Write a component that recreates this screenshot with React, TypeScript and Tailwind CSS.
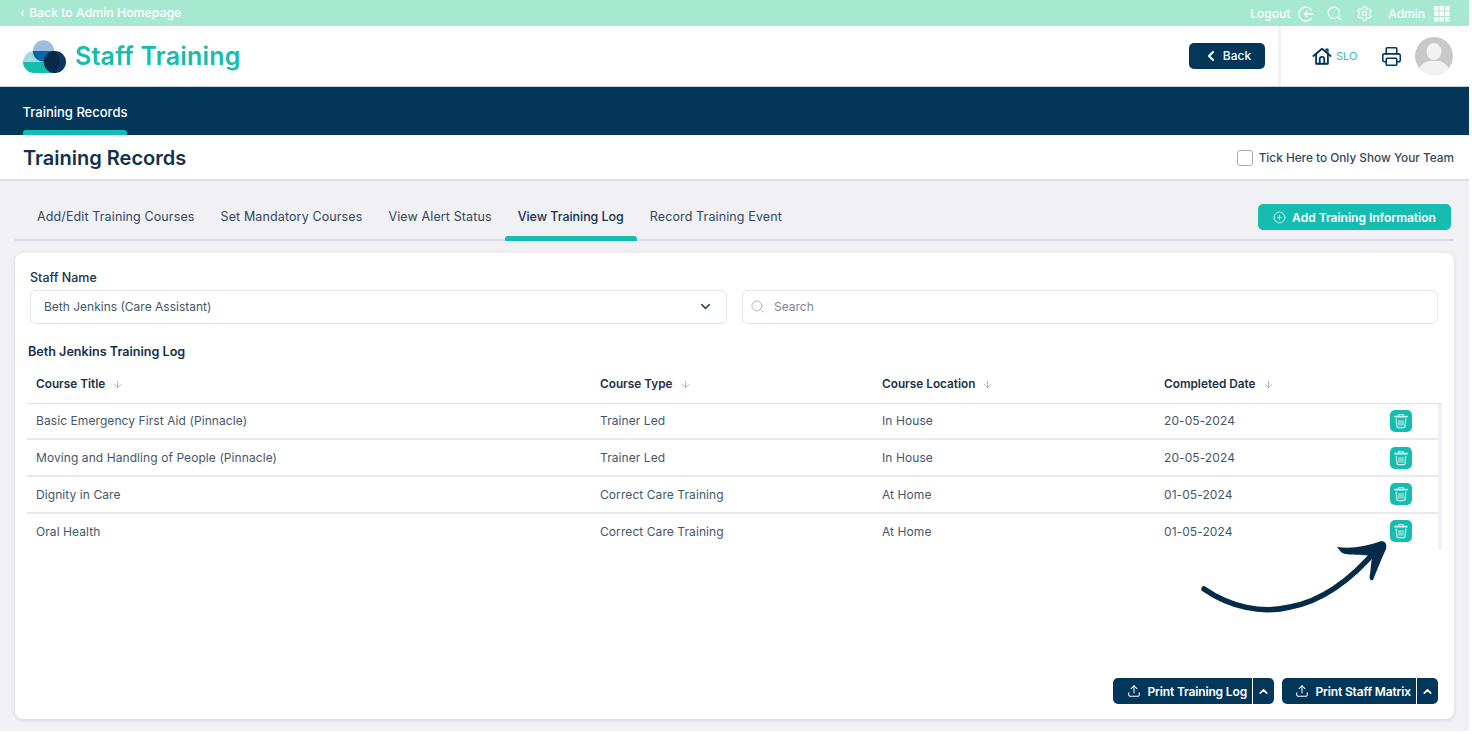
import { ArrowDown, ChevronDown, ChevronLeft, ChevronUp, CirclePlus, Printer, Search, Settings, Upload } from 'lucide-react'

const ROWS = [
  { title: 'Basic Emergency First Aid (Pinnacle)', type: 'Trainer Led', location: 'In House', date: '20-05-2024' },
  { title: 'Moving and Handling of People (Pinnacle)', type: 'Trainer Led', location: 'In House', date: '20-05-2024' },
  { title: 'Dignity in Care', type: 'Correct Care Training', location: 'At Home', date: '01-05-2024' },
  { title: 'Oral Health', type: 'Correct Care Training', location: 'At Home', date: '01-05-2024' },
]

const TABS = ['Add/Edit Training Courses', 'Set Mandatory Courses', 'View Alert Status', 'View Training Log', 'Record Training Event']

function Logo() {
  return (
    <svg className="mt-[1px]" width={44} height={34} viewBox="0 0 44 34" aria-hidden="true">
      <path d="M0 22 A11 11 0 0 1 11 11 H32 V22Z" fill="#a3dcd8" />
      <path d="M9.800 11 A10.700 10.700 0 0 1 31.200 11Z" fill="#9dbfdd" />
      <path d="M9.800 11 A10.700 10.700 0 0 0 31.200 11Z" fill="#0a66a8" />
      <path d="M0 22 H32 V33 H11 A11 11 0 0 1 0 22Z" fill="#17bcb0" />
      <circle cx="32" cy="22" r="11" fill="#0f3560" />
      <path d="M32 11 A11 11 0 0 0 32 33 A16 16 0 0 0 32 11Z" fill="#07294a" />
    </svg>
  )
}

function Avatar() {
  return (
    <svg width={38} height={38} viewBox="0 0 38 38" aria-hidden="true">
      <clipPath id="avatar-clip">
        <circle cx="19" cy="19" r="19" />
      </clipPath>
      <g clipPath="url(#avatar-clip)">
        <rect width="38" height="38" fill="#c9c9c9" />
        <ellipse cx="19" cy="14.500" rx="7.500" ry="8.500" fill="#f2f2f2" />
        <path d="M3 38 C3 29 9 25 14 24 H24 C29 25 35 29 35 38Z" fill="#f2f2f2" />
      </g>
    </svg>
  )
}

function LogoutIcon() {
  return (
    <svg width={16} height={16} viewBox="0 0 16 16" fill="none" stroke="white" strokeWidth={1.300} strokeLinecap="round" aria-hidden="true">
      <path d="M13.500 3.800 A7 7 0 1 0 13.500 12.200" />
      <path d="M15 8 H6.500 M9 5.500 L6.500 8 L9 10.500" />
    </svg>
  )
}

function GridIcon() {
  return (
    <svg width={16} height={16} viewBox="0 0 16 16" fill="white" aria-hidden="true">
      {[0, 5.500, 11].map((y) =>
        [0, 5.500, 11].map((x) => <rect key={`${x}-${y}`} x={x} y={y} width={4.500} height={4.500} />),
      )}
    </svg>
  )
}

function HouseIcon() {
  return (
    <svg width={20} height={20} viewBox="0 0 22 22" fill="none" stroke="#02375a" strokeWidth={2} strokeLinecap="round" strokeLinejoin="round" aria-hidden="true">
      <path d="M1.500 11 L11 3 L20.500 11" />
      <path d="M15.500 6.500 V3.500 H17.500 V8" strokeWidth={1.500} />
      <path d="M4.500 9.500 V19.500 H17.500 V9.500" />
      <path d="M8.500 19.500 V14.500 A2.500 2.500 0 0 1 13.500 14.500 V19.500" />
    </svg>
  )
}

function TrashIcon() {
  return (
    <svg width={16} height={16} viewBox="0 0 16 16" fill="none" stroke="#d5f5f1" strokeLinecap="round" strokeLinejoin="round" aria-hidden="true">
      <path d="M5.800 2.800 V1.500 H10.200 V2.800" strokeWidth={1.100} />
      <path d="M2 3.600 H14" strokeWidth={1.800} />
      <path d="M3.200 6 L3.900 13.300 A1.500 1.500 0 0 0 5.400 14.600 H10.600 A1.500 1.500 0 0 0 12.100 13.300 L12.800 6" strokeWidth={1.200} />
      <path d="M6 7.500 V12.300 M8 7.500 V12.300 M10 7.500 V12.300" strokeWidth={1} />
    </svg>
  )
}

function SplitButton({ label, mainWidth }: { label: string; mainWidth: string }) {
  return (
    <div className="flex h-[26px] overflow-hidden rounded-[5px] bg-[#02375a] text-white">
      <div className={`flex items-center justify-end gap-[6px] pr-[5px] ${mainWidth}`}>
        <Upload size={14} strokeWidth={1.800} />
        <span className="pt-[1px] text-[12px] font-semibold tracking-[-0.15px]">{label}</span>
      </div>
      <div className="flex w-[22px] items-center justify-center border-l border-white">
        <ChevronUp size={13} strokeWidth={3} />
      </div>
    </div>
  )
}

function SortHead({ label, className }: { label: string; className: string }) {
  return (
    <div className={`flex items-center gap-[7px] pt-[2px] ${className}`}>
      <span className="text-[11.800px] font-semibold text-[#1c3247]">{label}</span>
      <ArrowDown size={11} strokeWidth={1.500} className="text-[#8d96a0]" />
    </div>
  )
}

export default function App() {
  return (
    <div className="relative h-[734px] w-[1472px] overflow-hidden bg-white font-['Inter','Liberation_Sans',sans-serif]">
      <div className="flex h-[731px] w-[1469px] flex-col bg-[#f0f0f5]">
        <div className="flex h-[26px] shrink-0 items-center justify-between bg-[#a6e8d0] pl-[18px] pr-[19px] pt-[1px] text-[12.300px] font-medium text-white">
          <div className="flex items-center gap-[2px]">
            <ChevronLeft size={9} strokeWidth={3} />
            <span>Back to Admin Homepage</span>
          </div>
          <div className="flex items-center text-[12px]">
            <span>Logout</span>
            <span className="ml-[8px]"><LogoutIcon /></span>
            <Search size={17} strokeWidth={1.500} className="ml-[12px]" />
            <Settings size={17} strokeWidth={1.700} className="ml-[13px]" />
            <span className="ml-[15px]">Admin</span>
            <span className="ml-[9px]"><GridIcon /></span>
          </div>
        </div>

        <div className="flex h-[61px] shrink-0 items-center border-b border-[#c9d0d8] bg-white pl-[23px]">
          <Logo />
          <span className="ml-[8px] mt-[2px] text-[25px] font-semibold tracking-[0.2px] text-[#17bcb0]">Staff Training</span>
          <div className="ml-auto flex h-full items-center">
            <button className="flex h-[26px] w-[76px] items-center justify-center gap-[4px] rounded-[5px] bg-[#02375a] text-[12px] font-medium text-white">
              <ChevronLeft size={16} strokeWidth={3} />
              Back
            </button>
            <div className="ml-[13px] h-full w-[3px] bg-[#f0f0f5]" />
            <span className="ml-[31px]"><HouseIcon /></span>
            <span className="ml-[4px] w-[22px] text-[11px] text-[#2cc0b8]">SLO</span>
            <Printer size={21} strokeWidth={1.800} className="ml-[23px] text-[#02375a]" />
            <div className="ml-[13px] mr-[16px]">
              <Avatar />
            </div>
          </div>
        </div>

        <div className="flex h-[48px] shrink-0 bg-[#02375a] pl-[23px]">
          <div className="flex h-full w-[104px] flex-col">
            <div className="flex flex-1 items-center justify-center pt-[8px] text-[13px] font-medium whitespace-nowrap text-white">Training Records</div>
            <div className="h-[5px] rounded-t-[3px] bg-[#17bcb0]" />
          </div>
        </div>

        <div className="flex h-[46px] shrink-0 items-center justify-between border-b-2 border-[#dcdce4] bg-white pl-[23px] pr-[15px] pt-[2px]">
          <h1 className="text-[20px] font-semibold text-[#14304a]">Training Records</h1>
          <label className="flex items-center gap-[6px] text-[11.800px] font-medium text-[#33475b]">
            <span className="h-[16px] w-[16px] rounded-[3px] border border-[#a9aab8] bg-white" />
            <span className="pt-[1px]">Tick Here to Only Show Your Team</span>
          </label>
        </div>

        <div className="mx-[15px] flex h-[60px] shrink-0 items-start justify-between border-b-2 border-[#dcdce8] pr-[3px]">
          <div className="flex h-[60px] pl-[9px]">
            {TABS.map((tab) => {
              const active = tab === 'View Training Log'
              return (
                <div key={tab} className="flex h-full flex-col items-center px-[13px]">
                  <span className={`flex flex-1 items-center pt-[17px] text-[12.500px] whitespace-nowrap ${active ? 'font-medium tracking-[-0.05px] text-[#14304a]' : 'tracking-[0.12px] text-[#33475b]'}`}>{tab}</span>
                  <span className={`-mx-[13px] h-[5px] self-stretch rounded-t-[3px] ${active ? 'bg-[#17bcb0]' : ''}`} />
                </div>
              )
            })}
          </div>
          <button className="mt-[23px] flex h-[26px] w-[193px] items-center justify-center gap-[6px] rounded-[5px] bg-[#17bcb0] text-[12px] font-semibold text-white">
            <CirclePlus size={13} strokeWidth={1.500} />
            <span className="pt-[1px]">Add Training Information</span>
          </button>
        </div>

        <div className="mx-[15px] mt-[12px] flex h-[466px] w-[1439px] shrink-0 flex-col rounded-[8px] bg-white pl-[12px] pr-[12px] shadow-[0_1px_4px_rgba(20,30,60,0.12)]">
          <label className="mt-[16px] ml-[3px] text-[12.500px] font-medium text-[#1c3247]">Staff Name</label>
          <div className="mt-[2px] ml-[3px] flex gap-[15px]">
            <div className="flex h-[34px] w-[697px] items-center justify-between rounded-[6px] border border-[#e3e3ec] pl-[13px] pr-[13px] text-[12px] text-[#44576a]">
              <span className="pt-[1px]">Beth Jenkins (Care Assistant)</span>
              <ChevronDown size={15} strokeWidth={2.500} className="text-[#33475b]" />
            </div>
            <div className="flex h-[34px] w-[696px] items-center gap-[9px] rounded-[6px] border border-[#e3e3ec] pl-[7px] text-[12px] text-[#7b8794]">
              <Search size={15} strokeWidth={1.200} className="text-[#9aa3ad]" />
              <span className="pt-[1px]">Search</span>
            </div>
          </div>

          <h2 className="mt-[19px] ml-[1px] text-[12.600px] font-semibold text-[#14304a]">Beth Jenkins Training Log</h2>

          <div className="mt-[9px] flex h-[33px] border-b border-[#e3e3ec] pb-[6px] pl-[9px] pr-[4px]">
            <SortHead label="Course Title" className="w-[564px]" />
            <SortHead label="Course Type" className="w-[282px]" />
            <SortHead label="Course Location" className="w-[282px]" />
            <SortHead label="Completed Date" className="w-[200px]" />
          </div>

          <div className="h-[146px] w-[1415px] border-r-[4px] border-[#f0f0f5]">
            {ROWS.map((row) => (
              <div key={row.title} className="flex h-[36.700px] items-center border-b-2 border-[#e8e8ef] pl-[9px] text-[12px] tracking-[0.08px] text-[#44576a] last:border-b-transparent">
                <span className="w-[564px] pt-[1px]">{row.title}</span>
                <span className="w-[282px] pt-[1px]">{row.type}</span>
                <span className="w-[282px] pt-[1px]">{row.location}</span>
                <span className="w-[226px] pt-[1px]">{row.date}</span>
                <button className="flex h-[22px] w-[22px] items-center justify-center rounded-[5px] bg-[#17bcb0]">
                  <TrashIcon />
                </button>
              </div>
            ))}
          </div>

          <div className="mt-auto mb-[15px] flex justify-end gap-[8px] pr-[4px]">
            <SplitButton label="Print Training Log" mainWidth="w-[139px]" />
            <SplitButton label="Print Staff Matrix" mainWidth="w-[134px]" />
          </div>
        </div>
      </div>

      <svg className="pointer-events-none absolute left-[1195px] top-[535px]" width={200} height={85} viewBox="1195 535 200 85" aria-hidden="true">
        <path d="M1204 589 C1230 607 1262 614 1290 607 C1323 601 1352 579 1378 548" fill="none" stroke="#042c48" strokeWidth={5.500} strokeLinecap="round" />
        <path d="M1337 547 C1352 549 1368 546 1381 541 C1386 541 1387 545 1386 549 C1381 560 1377 570 1373 580 C1370 581 1369 578 1370 574 L1372 556 C1360 554 1345 556 1341 552 Z" fill="#042c48" />
      </svg>
    </div>
  )
}
